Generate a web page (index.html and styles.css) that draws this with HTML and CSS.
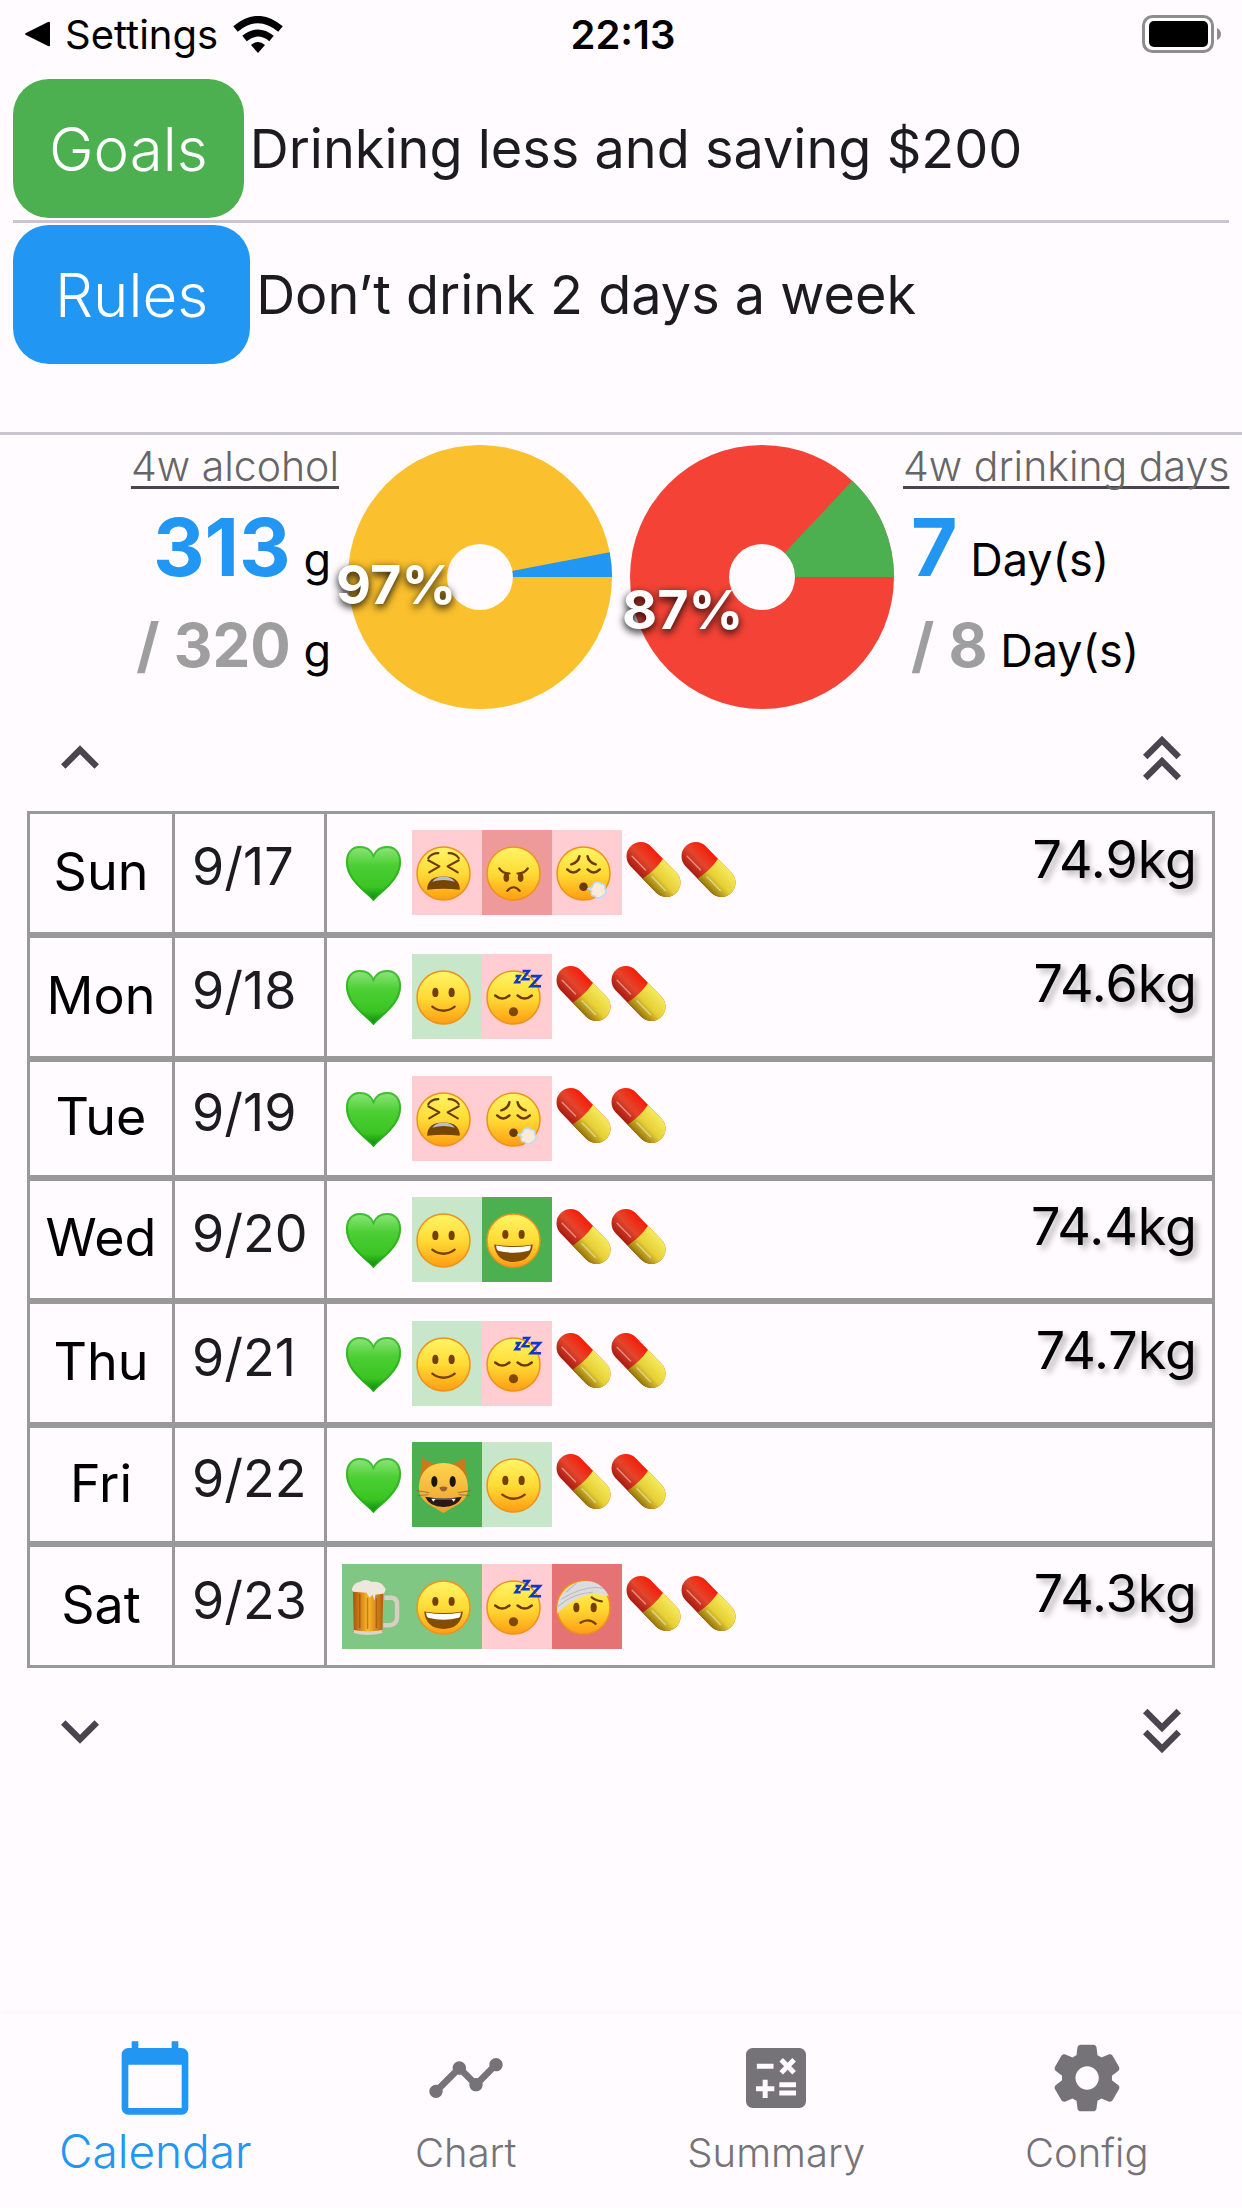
FILE: index.html
```html
<!DOCTYPE html>
<html lang="en">
<head>
    <meta charset="UTF-8">
    <meta name="viewport" content="width=device-width, initial-scale=1.0">
    <title>Calendar</title>
    <link rel="stylesheet" href="styles.css">
</head>
<body>
    <!-- Shared drawings for the calendar rows -->
    <svg class="defs" width="0" height="0" aria-hidden="true">
        <defs>
            <linearGradient id="gFace" x1="0" y1="0" x2="0" y2="1">
                <stop offset="0" stop-color="#fff566"/>
                <stop offset="0.5" stop-color="#ffdb35"/>
                <stop offset="1" stop-color="#ff9d13"/>
            </linearGradient>
            <linearGradient id="gHeart" x1="0" y1="0" x2="0" y2="1">
                <stop offset="0" stop-color="#8fe67c"/>
                <stop offset="0.35" stop-color="#4ccf34"/>
                <stop offset="0.75" stop-color="#3ac422"/>
                <stop offset="1" stop-color="#08800c"/>
            </linearGradient>
            <linearGradient id="gRed" x1="0" y1="0" x2="0" y2="1">
                <stop offset="0" stop-color="#f81c08"/>
                <stop offset="0.5" stop-color="#e4452c"/>
                <stop offset="1" stop-color="#a81c10"/>
            </linearGradient>
            <linearGradient id="gYellow" x1="0" y1="0" x2="0" y2="1">
                <stop offset="0" stop-color="#f5ea5c"/>
                <stop offset="0.55" stop-color="#e6cf35"/>
                <stop offset="1" stop-color="#947209"/>
            </linearGradient>
            <linearGradient id="gBeer" x1="0" y1="0" x2="1" y2="0">
                <stop offset="0" stop-color="#a85208"/>
                <stop offset="0.5" stop-color="#fdb92c"/>
                <stop offset="1" stop-color="#b35c0c"/>
            </linearGradient>
            <linearGradient id="gCat" x1="0" y1="0" x2="0" y2="1">
                <stop offset="0" stop-color="#ffd34f"/>
                <stop offset="1" stop-color="#eda02c"/>
            </linearGradient>
        </defs>

        <symbol id="heart" viewBox="0 0 56 56">
            <path d="M28 56C21 47 0 36 0 16C0 6 6 0 14 0C21 0 26 4 28 9C30 4 35 0 42 0C50 0 56 6 56 16C56 36 35 47 28 56Z" fill="url(#gHeart)"/>
            <path d="M28 55C21 46 1 35 1 16C1 7 6 1 14 1C21 1 26 5 28 10C30 5 35 1 42 1C50 1 55 7 55 16C55 35 35 46 28 55Z" fill="none" stroke="#25ad1b" stroke-width="2" opacity="0.7"/>
        </symbol>

        <symbol id="face" viewBox="0 0 54 54">
            <circle cx="27" cy="27" r="26" fill="url(#gFace)" stroke="#ee921a" stroke-width="1.5"/>
        </symbol>

        <symbol id="tired" viewBox="0 0 54 54">
            <use href="#face"/>
            <g fill="none" stroke="#6b3a04" stroke-width="2" stroke-linecap="round" stroke-linejoin="round">
                <path d="M12 12Q15 7 22 7M32 7Q39 7 42 12"/>
                <path d="M12 14L23 20L13 26M42 14L31 20L41 26"/>
            </g>
            <path d="M11 43Q11 30 27 30Q43 30 43 43Q27 41 11 43Z" fill="#764500"/>
            <path d="M16 35Q20 30 27 30Q34 30 38 35Q27 32 16 35Z" fill="#b9bdd0"/>
        </symbol>

        <symbol id="angry" viewBox="0 0 54 54">
            <use href="#face"/>
            <path d="M13 22Q16 27 23 27M41 22Q38 27 31 27M21 44Q27 37 33 44" fill="none" stroke="#6b3a04" stroke-width="2.2" stroke-linecap="round"/>
            <ellipse cx="20" cy="31" rx="2.800" ry="4.300" fill="#754001"/>
            <ellipse cx="34" cy="31" rx="2.800" ry="4.300" fill="#754001"/>
        </symbol>

        <symbol id="exhale" viewBox="0 0 54 54">
            <use href="#face"/>
            <path d="M15 18Q22 16 23 10M31 10Q32 16 39 18M11 23Q17 29 23 23M31 23Q37 29 43 23" fill="none" stroke="#6b3a04" stroke-width="2.4" stroke-linecap="round"/>
            <circle cx="27" cy="40" r="4.2" fill="#6b3a04"/>
            <path d="M32 42Q36 41 37 37Q41 34 44 37Q49 37 48 42Q51 46 46 49Q41 53 38 49Q33 49 35 44Z" fill="#fdebd9" stroke="#bcdcf5" stroke-width="1.6"/>
        </symbol>

        <symbol id="smile" viewBox="0 0 54 54">
            <use href="#face"/>
            <ellipse cx="19" cy="22" rx="3" ry="4.6" fill="#754001"/>
            <ellipse cx="35" cy="22" rx="3" ry="4.6" fill="#754001"/>
            <path d="M16 36Q27 44 38 36" fill="none" stroke="#754001" stroke-width="2.2" stroke-linecap="round"/>
        </symbol>

        <symbol id="sleep" viewBox="0 0 54 54" overflow="visible">
            <use href="#face"/>
            <path d="M9 25Q16 31 23 25M31 25Q38 31 45 25" fill="none" stroke="#6b3a04" stroke-width="2.4" stroke-linecap="round"/>
            <circle cx="27" cy="41" r="4.5" fill="#7d4903"/>
            <g class="snore">
                <polyline points="29,6 33,6 29,12 34,12"/>
                <polyline points="36,1 42,1 36,9 43,9"/>
                <polyline points="44,6 53,6 44,16 54,16"/>
            </g>
        </symbol>

        <symbol id="grin" viewBox="0 0 54 54">
            <use href="#face"/>
            <ellipse cx="19" cy="21" rx="3" ry="4.4" fill="#754001"/>
            <ellipse cx="35" cy="21" rx="3" ry="4.4" fill="#754001"/>
            <path d="M8 31Q27 34 46 31Q44 48 27 48Q10 48 8 31Z" fill="#824d00"/>
            <path d="M10 32Q27 35 44 32Q44 36 42 37Q27 41 12 37Q10 36 10 32Z" fill="#fff"/>
        </symbol>

        <symbol id="bandage" viewBox="0 0 54 54">
            <use href="#face"/>
            <path d="M1 33Q0 10 22 2Q42 -3 52 16Q34 11 24 17Q11 23 1 33Z" fill="#dcdcdf"/>
            <path d="M5 19Q28 5 46 8M2 26Q16 13 36 12M20 3Q14 8 10 12" fill="none" stroke="#b9b9bf" stroke-width="1"/>
            <ellipse cx="20" cy="27" rx="3" ry="4.6" fill="#754001"/>
            <ellipse cx="37" cy="27" rx="3" ry="4.6" fill="#754001"/>
            <path d="M35 17Q38 20 45 21M24 42Q32 37 39 43" fill="none" stroke="#754001" stroke-width="2.2" stroke-linecap="round"/>
        </symbol>

        <symbol id="cat" viewBox="0 0 54 54">
            <path d="M6 0L22 8L4 20ZM48 0L32 8L50 20Z" fill="#c97a1b"/>
            <path d="M27 5C42 5 52 16 51 31C50 44 38 47 27 54C16 47 4 44 3 31C2 16 12 5 27 5Z" fill="url(#gCat)"/>
            <ellipse cx="18" cy="23" rx="3" ry="5.4" fill="#1b1512"/>
            <ellipse cx="36" cy="23" rx="3" ry="5.4" fill="#1b1512"/>
            <path d="M23 29Q27 27 31 29Q30 33 27 33Q24 33 23 29Z" fill="#9a6138"/>
            <path d="M9 38Q27 41 45 38Q41 48 27 48Q13 48 9 38Z" fill="#2a1a16"/>
            <path d="M15 40L17 43L19 40.5H35L37 43L39 40Z" fill="#fff"/>
            <path d="M0 32L13 34M1 37L12 36M54 32L41 34M53 37L42 36" stroke="#8d6a2c" stroke-width="0.8"/>
        </symbol>

        <symbol id="beer" viewBox="0 0 54 56">
            <path d="M38 18H45Q51 18 51 25V38Q51 45 44 46H37" fill="none" stroke="#d9cec3" stroke-width="4.5"/>
            <path d="M6 9H37L36 53Q21 57 7 53Z" fill="url(#gBeer)"/>
            <path d="M13 14V49M21 18V50M30 18V49" stroke="#7d3d06" stroke-width="1.5" opacity="0.45"/>
            <path d="M7 51Q21 54 36 51V54Q21 58 7 54Z" fill="#ddd3ca"/>
            <path d="M5 10Q6 3 13 2Q19 -2 25 2Q34 1 38 7Q41 10 37 14L29 15L28 21L26 15L23 18L20 13L6 12Z" fill="#efe7de"/>
        </symbol>

        <symbol id="pill" viewBox="0 0 54 54">
            <g transform="rotate(46 27 27)">
                <rect x="-5" y="13" width="64" height="28" rx="14" fill="url(#gRed)"/>
                <path d="M26 13H45A14 14 0 0 1 45 41H26Q29 27 26 13Z" fill="url(#gYellow)"/>
                <path d="M3 33H22M31 33H50" stroke="#fff" stroke-width="1.4" stroke-linecap="round" opacity="0.45"/>
            </g>
        </symbol>
    </svg>

    <div class="app">
        <header class="status">
            <div class="status-left">
                <svg width="26" height="26" viewBox="0 0 26 26" aria-hidden="true"><path d="M2 12L24 1Q26 0 26 2V24Q26 26 24 25L2 14Q0 13 2 12Z"/></svg>
                <span class="back">Settings</span>
                <svg width="50" height="37" viewBox="0 0 50 37" aria-hidden="true">
                    <path d="M25 37L18 29Q25 23 32 29Z"/>
                    <path d="M11.500 22.500Q25 11.500 38.500 22.500" fill="none" stroke="#000" stroke-width="7"/>
                    <path d="M2.500 13Q25 -6 47.500 13" fill="none" stroke="#000" stroke-width="7"/>
                </svg>
            </div>
            <time class="clock">22:13</time>
            <svg class="battery" width="80" height="38" viewBox="0 0 80 38" role="img" aria-label="Battery full">
                <rect x="1.500" y="1.500" width="69" height="35" rx="9" fill="#fff" stroke="#8e8c8e" stroke-width="3"/>
                <rect x="7" y="6" width="59" height="26" rx="5"/>
                <path d="M75 13Q79 15 79 19Q79 23 75 25Z" fill="#8e8c8e"/>
            </svg>
        </header>

        <section class="plans">
            <div class="plan">
                <button type="button" class="plan-button goals">Goals</button>
                <span>Drinking less and saving $200</span>
            </div>
            <div class="plan">
                <button type="button" class="plan-button rules">Rules</button>
                <span>Don’t drink 2 days a week</span>
            </div>
        </section>

        <main>
            <section class="stats">
                <div class="stat stat-left">
                    <a href="#alcohol" class="stat-title">4w alcohol</a>
                    <div class="amount"><b>313</b> g</div>
                    <div class="limit"><b>/ 320</b> g</div>
                </div>
                <div class="pie">
                    <svg viewBox="-132 -132 264 264" aria-hidden="true">
                        <circle r="132" fill="#fbc02d"/>
                        <path d="M0 0L132 0A132 132 0 0 0 129.660 -24.730Z" fill="#2196f3"/>
                        <circle r="33" fill="#fffbff"/>
                    </svg>
                    <span class="percent percent-alcohol">97%</span>
                </div>
                <div class="pie">
                    <svg viewBox="-132 -132 264 264" aria-hidden="true">
                        <circle r="132" fill="#f44336"/>
                        <path d="M0 0L132 0A132 132 0 0 0 90.360 -96.220Z" fill="#4caf50"/>
                        <circle r="33" fill="#fffbff"/>
                    </svg>
                    <span class="percent percent-days">87%</span>
                </div>
                <div class="stat">
                    <a href="#days" class="stat-title">4w drinking days</a>
                    <div class="amount"><b>7</b> Day(s)</div>
                    <div class="limit"><b>/ 8</b> Day(s)</div>
                </div>
            </section>

            <div class="pager">
                <button type="button" aria-label="Previous week"><svg viewBox="0 0 24 24"><path d="M7.410 15.410 12 10.830l4.590 4.580L18 14l-6-6-6 6z"/></svg></button>
                <button type="button" aria-label="Previous month"><svg viewBox="0 0 24 24"><path d="M6 17.590 7.410 19 12 14.420 16.590 19 18 17.590l-6-6zM6 11l1.410 1.410L12 7.830l4.590 4.580L18 11l-6-6z"/></svg></button>
            </div>

            <table class="week">
                <tr>
                    <th scope="row">Sun</th>
                    <td class="date">9/17</td>
                    <td><div class="entry">
                        <span class="tile"><svg><use href="#heart"/></svg></span>
                        <span class="tile pink"><svg><use href="#tired"/></svg></span>
                        <span class="tile rose"><svg><use href="#angry"/></svg></span>
                        <span class="tile pink"><svg><use href="#exhale"/></svg></span>
                        <span class="pills"><svg><use href="#pill"/></svg><svg><use href="#pill"/></svg></span>
                        <span class="weight">74.9kg</span>
                    </div></td>
                </tr>
                <tr>
                    <th scope="row">Mon</th>
                    <td class="date">9/18</td>
                    <td><div class="entry">
                        <span class="tile"><svg><use href="#heart"/></svg></span>
                        <span class="tile mint"><svg><use href="#smile"/></svg></span>
                        <span class="tile pink"><svg><use href="#sleep"/></svg></span>
                        <span class="pills"><svg><use href="#pill"/></svg><svg><use href="#pill"/></svg></span>
                        <span class="weight">74.6kg</span>
                    </div></td>
                </tr>
                <tr>
                    <th scope="row">Tue</th>
                    <td class="date">9/19</td>
                    <td><div class="entry">
                        <span class="tile"><svg><use href="#heart"/></svg></span>
                        <span class="tile pink"><svg><use href="#tired"/></svg></span>
                        <span class="tile pink"><svg><use href="#exhale"/></svg></span>
                        <span class="pills"><svg><use href="#pill"/></svg><svg><use href="#pill"/></svg></span>
                    </div></td>
                </tr>
                <tr>
                    <th scope="row">Wed</th>
                    <td class="date">9/20</td>
                    <td><div class="entry">
                        <span class="tile"><svg><use href="#heart"/></svg></span>
                        <span class="tile mint"><svg><use href="#smile"/></svg></span>
                        <span class="tile green"><svg><use href="#grin"/></svg></span>
                        <span class="pills"><svg><use href="#pill"/></svg><svg><use href="#pill"/></svg></span>
                        <span class="weight">74.4kg</span>
                    </div></td>
                </tr>
                <tr>
                    <th scope="row">Thu</th>
                    <td class="date">9/21</td>
                    <td><div class="entry">
                        <span class="tile"><svg><use href="#heart"/></svg></span>
                        <span class="tile mint"><svg><use href="#smile"/></svg></span>
                        <span class="tile pink"><svg><use href="#sleep"/></svg></span>
                        <span class="pills"><svg><use href="#pill"/></svg><svg><use href="#pill"/></svg></span>
                        <span class="weight">74.7kg</span>
                    </div></td>
                </tr>
                <tr>
                    <th scope="row">Fri</th>
                    <td class="date">9/22</td>
                    <td><div class="entry">
                        <span class="tile"><svg><use href="#heart"/></svg></span>
                        <span class="tile green"><svg><use href="#cat"/></svg></span>
                        <span class="tile mint"><svg><use href="#smile"/></svg></span>
                        <span class="pills"><svg><use href="#pill"/></svg><svg><use href="#pill"/></svg></span>
                    </div></td>
                </tr>
                <tr>
                    <th scope="row">Sat</th>
                    <td class="date">9/23</td>
                    <td><div class="entry">
                        <span class="tile leaf"><svg><use href="#beer"/></svg></span>
                        <span class="tile leaf"><svg><use href="#grin"/></svg></span>
                        <span class="tile pink"><svg><use href="#sleep"/></svg></span>
                        <span class="tile coral"><svg><use href="#bandage"/></svg></span>
                        <span class="pills"><svg><use href="#pill"/></svg><svg><use href="#pill"/></svg></span>
                        <span class="weight">74.3kg</span>
                    </div></td>
                </tr>
            </table>

            <div class="pager pager-bottom">
                <button type="button" aria-label="Next week"><svg viewBox="0 0 24 24"><path d="M7.410 8.590 12 13.170l4.590-4.580L18 10l-6 6-6-6z"/></svg></button>
                <button type="button" aria-label="Next month"><svg viewBox="0 0 24 24"><path d="M18 6.410 16.590 5 12 9.580 7.410 5 6 6.410l6 6zM18 13l-1.410-1.410L12 16.170l-4.590-4.580L6 13l6 6z"/></svg></button>
            </div>
        </main>

        <nav class="tabs">
            <a href="#calendar" class="active">
                <svg viewBox="0 0 24 24"><path d="M20 3h-1V1h-2v2H7V1H5v2H4c-1.100 0-2 .9-2 2v16c0 1.100.9 2 2 2h16c1.100 0 2-.9 2-2V5c0-1.100-.9-2-2-2zm0 18H4V8h16v13z"/></svg>
                <span>Calendar</span>
            </a>
            <a href="#chart">
                <svg viewBox="0 0 24 24"><path d="M23 8c0 1.100-.9 2-2 2-.18 0-.35-.02-.51-.07l-3.560 3.550c.05.16.07.34.07.52 0 1.100-.9 2-2 2s-2-.9-2-2c0-.18.02-.36.07-.52l-2.550-2.550c-.16.05-.34.07-.52.07s-.36-.02-.52-.07l-4.550 4.560c.05.16.07.33.07.51 0 1.100-.9 2-2 2s-2-.9-2-2 .9-2 2-2c.18 0 .35.02.51.07l4.560-4.550C8.020 9.360 8 9.180 8 9c0-1.100.9-2 2-2s2 .9 2 2c0 .18-.02.36-.07.52l2.550 2.550c.16-.05.34-.07.52-.07s.36.02.52.07l3.550-3.560C19.020 8.350 19 8.180 19 8c0-1.100.9-2 2-2s2 .9 2 2z"/></svg>
                <span>Chart</span>
            </a>
            <a href="#summary">
                <svg viewBox="0 0 24 24"><path d="M19 3H5c-1.100 0-2 .9-2 2v14c0 1.100.9 2 2 2h14c1.100 0 2-.9 2-2V5c0-1.100-.9-2-2-2zm-5.970 4.060L14.090 6l1.410 1.410L16.910 6l1.060 1.060-1.410 1.410 1.410 1.410-1.060 1.060-1.410-1.400-1.410 1.410-1.060-1.060 1.410-1.410-1.410-1.420zM6.250 7.720h5v1.500h-5v-1.500zM11.500 16h-2v2H8v-2H6v-1.500h2v-2h1.500v2h2V16zm6.500 1.250h-5v-1.500h5v1.500zm0-2.500h-5v-1.500h5v1.500z"/></svg>
                <span>Summary</span>
            </a>
            <a href="#config">
                <svg viewBox="0 0 24 24"><path d="M19.500 12c0-.23-.01-.45-.03-.68l1.860-1.410c.4-.3.510-.86.260-1.300l-1.870-3.230c-.25-.44-.79-.62-1.250-.42l-2.150.91c-.37-.26-.76-.49-1.170-.68l-.29-2.310c-.06-.5-.49-.88-.99-.88h-3.730c-.51 0-.94.38-1 .88l-.29 2.310c-.41.19-.8.420-1.170.680l-2.150-.91c-.46-.2-1-.02-1.250.420L2.410 8.620c-.25.440-.14.990.260 1.290l1.860 1.410c-.02.230-.03.450-.03.680s.01.450.03.680l-1.860 1.410c-.4.300-.51.860-.26 1.300l1.870 3.230c.25.440.79.620 1.250.420l2.150-.91c.37.260.76.490 1.170.680l.29 2.310c.06.500.49.880.99.880h3.730c.5 0 .93-.38.990-.88l.29-2.310c.41-.19.8-.42 1.170-.68l2.150.91c.46.200 1 .02 1.250-.42l1.870-3.230c.25-.44.14-.99-.26-1.300l-1.860-1.410c.03-.23.040-.45.040-.68zm-7.460 3.500c-1.930 0-3.500-1.570-3.500-3.500s1.570-3.500 3.500-3.500 3.500 1.570 3.500 3.500-1.570 3.500-3.500 3.500z"/></svg>
                <span>Config</span>
            </a>
        </nav>
    </div>
</body>
</html>
```
FILE: styles.css
```css
* {
    box-sizing: border-box;
}
body {
    margin: 0;
    background: #fffbff;
    color: #1c1b1f;
    font-family: Inter, "Liberation Sans", sans-serif;
    font-size: 52px;
}
button {
    border: none;
    background: none;
    padding: 0;
    font: inherit;
    cursor: pointer;
}
.defs {
    position: absolute;
}
.snore {
    fill: none;
    stroke: #1238c8;
    stroke-width: 2.5;
}
.app {
    display: flex;
    flex-direction: column;
    min-height: 100vh;
}

/* Status bar */
.status {
    display: grid;
    grid-template-columns: 1fr auto 1fr;
    align-items: center;
    height: 68px;
    margin-bottom: 11px;
    padding: 0 20px 0 24px;
    color: #000;
    font-size: 40px;
}
.status-left {
    display: flex;
    align-items: center;
    gap: 15px;
}
.clock {
    font-weight: 600;
}
.battery {
    justify-self: end;
}

/* Goals and rules */
.plans {
    padding: 0 13px 68px;
    border-bottom: 3px solid #c9c4d0;
}
.plan {
    display: flex;
    align-items: center;
    gap: 6px;
    font-size: 54px;
}
.plan + .plan {
    margin-top: 2px;
    padding-top: 2px;
    border-top: 3px solid #c9c4d0;
}
.plan-button {
    height: 139px;
    border-radius: 36px;
    color: #fff;
    font-size: 60px;
    font-weight: 300;
}
.goals {
    padding: 0 36px;
    background: #4caf50;
}
.rules {
    padding: 0 42px;
    background: #2196f3;
}

/* Four week totals */
.stats {
    display: grid;
    grid-template-columns: 1fr 264px 264px 1fr;
    column-gap: 18px;
    padding-top: 10px;
}
.stat {
    margin: -3px 0 0 -9px;
    color: #000;
    font-size: 45px;
    white-space: nowrap;
}
.stat-left {
    margin: -3px -9px 0 0;
    text-align: right;
}
.stat-title {
    display: block;
    height: 60px;
    color: #666;
    font-size: 41px;
    font-weight: 300;
    line-height: 48px;
    text-decoration: underline;
    text-decoration-color: #49454f;
    text-decoration-thickness: 3px;
    text-decoration-skip-ink: none;
    text-underline-offset: 5px;
}
.amount,
.limit {
    padding: 0 8px;
}
.amount {
    line-height: 90px;
}
.limit {
    line-height: 80px;
}
.amount b {
    color: #2196f3;
    font-size: 80px;
}
.limit b {
    color: #9e9e9e;
    font-size: 60px;
}
.pie {
    position: relative;
    height: 264px;
}
.pie svg {
    display: block;
    width: 100%;
}
.percent {
    position: absolute;
    color: #fff;
    font-size: 54px;
    font-weight: 700;
    line-height: 60px;
    text-shadow: 0 3px 9px #000;
}
.percent-alcohol {
    left: -12px;
    top: 110px;
}
.percent-days {
    left: -8px;
    top: 135px;
}

/* Week paging */
.pager {
    display: flex;
    justify-content: space-between;
    padding: 11px 42px 15px;
}
.pager-bottom {
    padding-top: 25px;
}
.pager svg {
    display: block;
    width: 76px;
    height: 76px;
    fill: #49454f;
}

/* Calendar */
.week {
    width: calc(100% - 54px);
    height: 857px;
    margin: 0 27px;
    border-collapse: separate;
    border-spacing: 0;
    border-left: 3px solid #999;
}
.week th,
.week td {
    padding: 0;
    border: 3px solid #999;
    border-left: none;
}
.week th {
    width: 145px;
    padding-bottom: 3px;
    color: #000;
    font-weight: 400;
}
.week .date {
    width: 152px;
    padding: 0 0 12px 17px;
}
.entry {
    display: flex;
    align-items: center;
    padding: 0 15px;
}
.tile {
    width: 70px;
    height: 85px;
    padding: 16px 4px;
}
.tile svg,
.pills svg {
    display: block;
    width: 55px;
    height: 55px;
    overflow: visible;
}
.pills {
    display: flex;
    padding: 0 0 6px 4px;
}
.pink {
    background: #ffcdd2;
}
.rose {
    background: #ef9a9a;
}
.coral {
    background: #e57373;
}
.mint {
    background: #c8e6c9;
}
.leaf {
    background: #81c784;
}
.green {
    background: #4caf50;
}
.weight {
    margin-left: auto;
    padding-bottom: 26px;
    color: #000;
    text-shadow: 4px 4px 6px rgba(0, 0, 0, 0.3);
}

/* Bottom tabs */
.tabs {
    display: grid;
    grid-template-columns: repeat(4, 1fr);
    margin-top: auto;
    padding: 24px 0 27px;
    box-shadow: 0 -2px 4px rgba(120, 80, 80, 0.04);
}
.tabs a {
    display: flex;
    flex-direction: column;
    align-items: center;
    gap: 7px;
    color: #757377;
    font-size: 40px;
    font-weight: 300;
    line-height: 56px;
    text-decoration: none;
}
.tabs svg {
    width: 80px;
    height: 80px;
    fill: currentColor;
}
.tabs .active {
    gap: 5px;
    color: #2196f3;
    font-size: 46px;
}
```
